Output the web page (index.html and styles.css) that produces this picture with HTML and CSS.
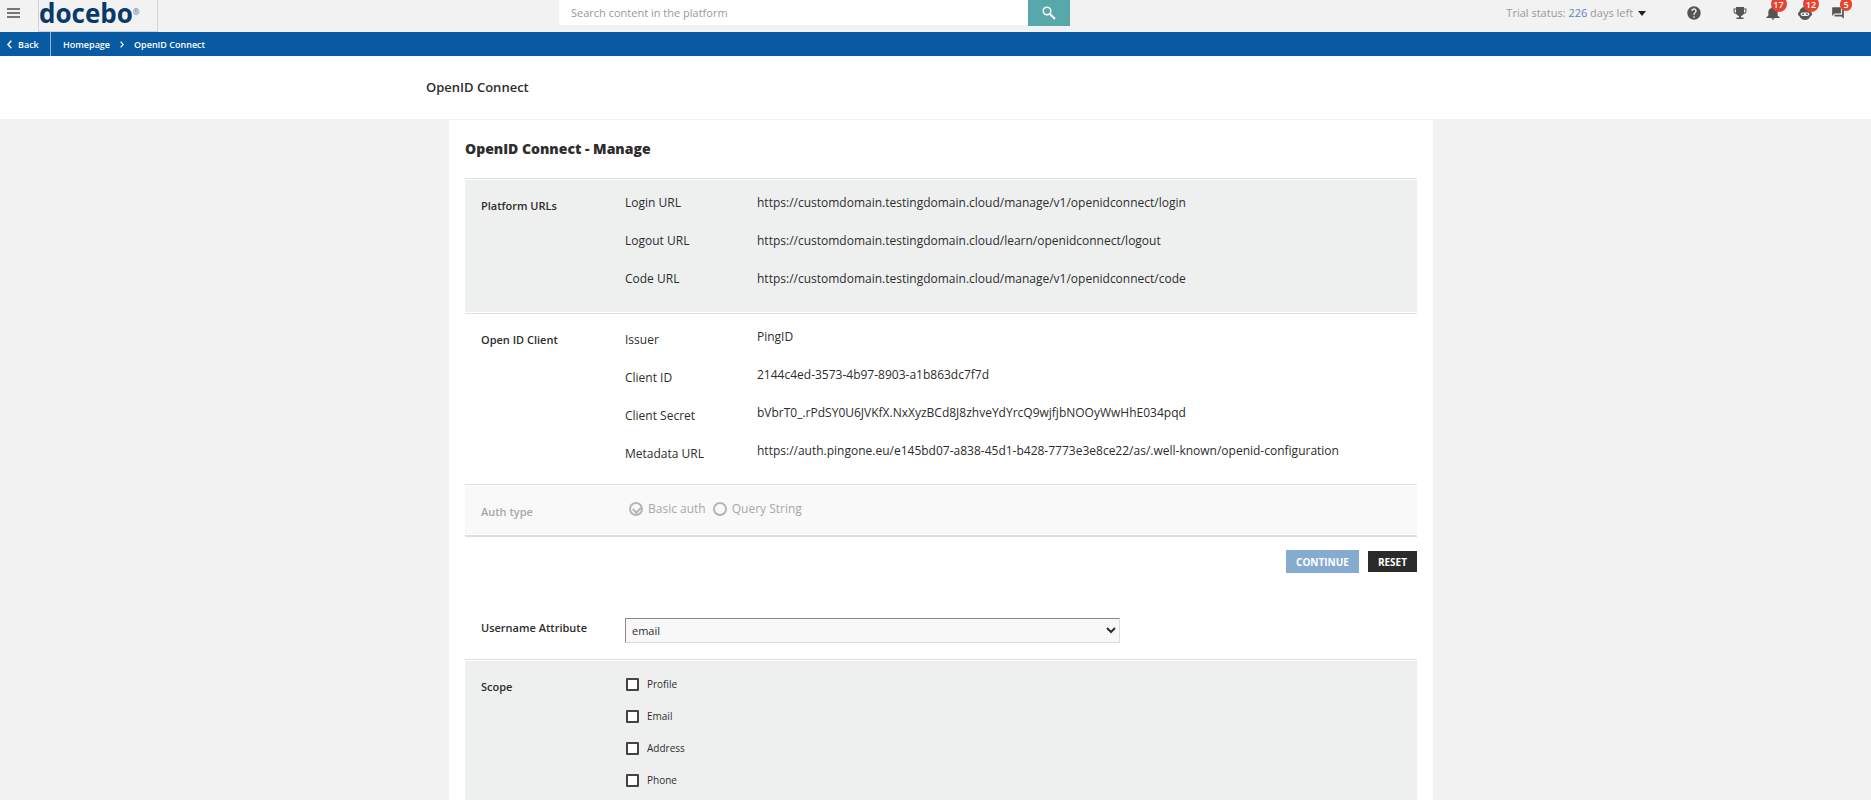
FILE: index.html
```html
<!DOCTYPE html>
<html lang="en">
<head>
    <meta charset="UTF-8">
    <meta name="viewport" content="width=device-width, initial-scale=1.0">
    <title>OpenID Connect</title>
    <link rel="stylesheet" href="styles.css">
</head>
<body>
    <header class="topbar">
        <button class="menu-btn" type="button" aria-label="Menu"><span></span><span></span><span></span></button>
        <a class="logo" href="#">docebo<sup>®</sup></a>

        <form class="search">
            <input type="search" placeholder="Search content in the platform" aria-label="Search">
            <button type="button" aria-label="Submit search">
                <svg width="14" height="14" viewBox="0 0 14 14"><circle cx="5" cy="5" r="3.8" fill="none" stroke="#fff" stroke-width="1.5"/><path d="M8 8l5 5" stroke="#fff" stroke-width="2"/></svg>
            </button>
        </form>

        <button class="trial" type="button">Trial status: <b>226</b> days left <i class="caret"></i></button>

        <nav class="tools">
            <a class="tool" href="#" aria-label="Help">
                <svg width="16" height="16" viewBox="0 0 24 24"><path d="M12 2C6.48 2 2 6.48 2 12s4.480 10 10 10 10-4.480 10-10S17.520 2 12 2zm1 17h-2v-2h2v2zm2.070-7.750l-.9.920C13.450 12.900 13 13.500 13 15h-2v-.5c0-1.100.45-2.100 1.170-2.830l1.240-1.260c.37-.36.59-.86.59-1.410 0-1.100-.9-2-2-2s-2 .9-2 2H8c0-2.210 1.790-4 4-4s4 1.790 4 4c0 .88-.36 1.680-.93 2.250z"/></svg>
            </a>
            <a class="tool" href="#" aria-label="Awards">
                <svg width="14" height="14" viewBox="0 0 14 14"><path d="M3 1h8v1.500h2.500v2.500c0 1.800-1.200 2.800-2.800 3-.6 1-1.500 1.700-2.700 1.900v1.600h2.500v1.500h-7v-1.500H6V9.900C4.800 9.700 3.900 9 3.300 8 1.700 7.800.5 6.800.5 5V2.500H3zM1.500 3.600V5c0 .9.5 1.500 1.500 1.800V3.600zm9.500 0v3.200c1-.3 1.500-.9 1.500-1.800V3.600z"/></svg>
            </a>
            <a class="tool" href="#" aria-label="Notifications">
                <svg width="16" height="16" viewBox="0 0 24 24"><path d="M12 22c1.100 0 2-.9 2-2h-4c0 1.100.9 2 2 2zm7-6v-5c0-3.400-1.900-5.900-5-6.600V3.500a2 2 0 0 0-4 0v.9C6.900 5.100 5 7.600 5 11v5l-3 2.500V19.500h20v-1z"/></svg>
                <span class="badge">17</span>
            </a>
            <a class="tool" href="#" aria-label="Assistant">
                <svg width="16" height="16" viewBox="0 0 16 16"><path fill-rule="evenodd" d="M8 2C4.800 2 2.700 4 2.300 7 1.500 7.200 1 8 1 9s.5 1.900 1.300 2.100C3.200 13.500 5.200 15 8 15s4.800-1.500 5.700-3.900C14.500 10.900 15 10 15 9s-.5-1.800-1.300-2C13.300 4 11.200 2 8 2zM5.500 7.500h5c1.200 0 1.900.6 1.900 1.500s-.7 1.900-1.900 1.900h-5c-1.200 0-1.900-1-1.900-1.900s.7-1.500 1.900-1.500z"/><circle cx="6" cy="9.200" r=".9"/><circle cx="10" cy="9.200" r=".9"/></svg>
                <span class="badge">12</span>
            </a>
            <a class="tool" href="#" aria-label="Messages">
                <svg width="14" height="14" viewBox="0 0 24 24"><path d="M21 6h-2v9H6v2c0 .55.45 1 1 1h11l4 4V7c0-.55-.45-1-1-1zm-4 6V3c0-.55-.45-1-1-1H3c-.55 0-1 .45-1 1v14l4-4h10c.55 0 1-.45 1-1z"/></svg>
                <span class="badge small">5</span>
            </a>
        </nav>
    </header>

    <nav class="breadcrumb">
        <a class="back" href="#">
            <svg width="5" height="9" viewBox="0 0 5 9"><path d="M4.300.7L1 4.500l3.300 3.800" fill="none" stroke="#fff" stroke-width="1.500"/></svg>
            <span>Back</span>
        </a>
        <a href="#">Homepage</a>
        <svg width="4" height="7" viewBox="0 0 4 7"><path d="M.6.6L3.200 3.500.6 6.400" fill="none" stroke="#fff" stroke-width="1.200"/></svg>
        <a href="#">OpenID Connect</a>
    </nav>

    <div class="title-bar">
        <h1 class="wrap">OpenID Connect</h1>
    </div>

    <div class="wrap content">
        <main class="panel">
            <h2>OpenID Connect - Manage</h2>

            <section class="group shaded urls">
                <h3>Platform URLs</h3>
                <dl>
                    <dt>Login URL</dt>
                    <dd>https://customdomain.testingdomain.cloud/manage/v1/openidconnect/login</dd>
                    <dt>Logout URL</dt>
                    <dd>https://customdomain.testingdomain.cloud/learn/openidconnect/logout</dd>
                    <dt>Code URL</dt>
                    <dd>https://customdomain.testingdomain.cloud/manage/v1/openidconnect/code</dd>
                </dl>
            </section>

            <section class="group client">
                <h3>Open ID Client</h3>
                <dl>
                    <dt>Issuer</dt>
                    <dd>PingID</dd>
                    <dt>Client ID</dt>
                    <dd>2144c4ed-3573-4b97-8903-a1b863dc7f7d</dd>
                    <dt>Client Secret</dt>
                    <dd>bVbrT0_.rPdSY0U6JVKfX.NxXyzBCd8J8zhveYdYrcQ9wjfjbNOOyWwHhE034pqd</dd>
                    <dt>Metadata URL</dt>
                    <dd>https://auth.pingone.eu/e145bd07-a838-45d1-b428-7773e3e8ce22/as/.well-known/openid-configuration</dd>
                </dl>
            </section>

            <section class="group auth">
                <h3>Auth type</h3>
                <div class="radios">
                    <label><input type="radio" name="auth" checked disabled>Basic auth</label>
                    <label><input type="radio" name="auth" disabled>Query String</label>
                </div>
            </section>

            <div class="actions">
                <button class="btn continue" type="button">CONTINUE</button>
                <button class="btn reset" type="button">RESET</button>
            </div>

            <section class="username">
                <label for="username-attr">Username Attribute</label>
                <select id="username-attr">
                    <option>email</option>
                </select>
            </section>

            <section class="group shaded scope">
                <h3>Scope</h3>
                <div class="checks">
                    <label><input type="checkbox">Profile</label>
                    <label><input type="checkbox">Email</label>
                    <label><input type="checkbox">Address</label>
                    <label><input type="checkbox">Phone</label>
                </div>
            </section>
        </main>
    </div>
</body>
</html>
```
FILE: styles.css
```css
* {
    box-sizing: border-box;
}
body {
    margin: 0;
    min-height: 100vh;
    display: flex;
    flex-direction: column;
    background: #f2f2f2;
    color: #2d2d2d;
    font-family: "Open Sans", sans-serif;
    font-size: 12px;
    line-height: 18px;
}
a {
    color: inherit;
    text-decoration: none;
}
button, input, select {
    font-family: inherit;
    margin: 0;
}
h1, h2, h3, dl, dd {
    margin: 0;
}

/* top bar */
.topbar {
    display: grid;
    grid-template-columns: 38px 120px 1fr auto auto;
    height: 32px;
    align-items: start;
}
.menu-btn {
    display: flex;
    flex-direction: column;
    gap: 2px;
    padding: 8px 0 0 7px;
    border: 0;
    background: none;
}
.menu-btn span {
    width: 13px;
    height: 2px;
    background: #777;
}
.logo {
    height: 32px;
    border: solid #d2d2d2;
    border-width: 0 1px 1px;
    color: #063a68;
    font-size: 26px;
    font-weight: 700;
    line-height: 27px;
}
.logo sup {
    color: #5c86ab;
    font-size: 8px;
    line-height: 8px;
    vertical-align: 8px;
}
.search {
    display: flex;
    align-items: start;
    width: 511px;
    margin-left: 401px;
}
.search input {
    flex: 1;
    height: 25px;
    padding: 0 12px;
    border: 0;
    background: #fff;
    font-size: 11px;
}
.search input::placeholder {
    color: #999;
}
.search button {
    display: flex;
    justify-content: center;
    align-items: center;
    width: 42px;
    height: 26px;
    padding: 0;
    border: 0;
    background: #57a8ab;
}
.trial {
    padding: 4px 0 0;
    border: 0;
    background: none;
    color: #999;
    font-size: 11px;
    line-height: 18px;
}
.trial b {
    color: #5c83c0;
    font-weight: 400;
}
.caret {
    display: inline-block;
    margin-left: 2px;
    border: 4px solid transparent;
    border-top: 5px solid #222;
    border-bottom: 0;
    vertical-align: 1px;
}
.tools {
    display: grid;
    grid-template-columns: 56px 35px 31px 34px 32px;
    padding: 0 17px 0 20px;
}
.tool {
    position: relative;
    display: flex;
    justify-content: center;
    align-items: center;
    height: 25px;
    fill: #555;
}
.badge {
    position: absolute;
    top: -4px;
    left: 50%;
    min-width: 16px;
    height: 16px;
    margin-left: -2px;
    border-radius: 8px;
    background: #e8432f;
    color: #fff;
    font-size: 9px;
    font-weight: 600;
    line-height: 17px;
    text-align: center;
}
.badge.small {
    min-width: 12px;
    height: 13px;
    top: -2px;
    margin-left: 2px;
    line-height: 13px;
}

/* breadcrumb */
.breadcrumb {
    display: flex;
    align-items: center;
    gap: 10px;
    height: 24px;
    background: #085aa2;
    color: #fff;
    font-size: 9px;
    font-weight: 600;
}
.breadcrumb > a:not(.back), .back span {
    padding-top: 2px;
}
.back {
    display: flex;
    align-items: center;
    gap: 6px;
    width: 51px;
    height: 24px;
    margin-right: 2px;
    padding-left: 7px;
    border-right: 1px solid #8fb4d6;
}

/* page */
.title-bar {
    height: 63px;
    background: #fff;
}
.wrap {
    width: 100%;
    max-width: 1019px;
    margin: 0 auto;
}
.title-bar h1 {
    font-size: 13px;
    font-weight: 600;
    line-height: 62px;
}
.content {
    flex: 1;
    display: flex;
    padding: 1px 12px 0 23px;
}
.panel {
    flex: 1;
    display: flex;
    flex-direction: column;
    padding: 0 16px;
    background: #fff;
}
.panel h2 {
    font-size: 14px;
    font-weight: 800;
    line-height: 58px;
}
.group {
    display: grid;
    grid-template-columns: 144px 1fr;
    padding: 15px 16px 0;
    border-top: 1px solid #dedede;
    box-shadow: inset 0 1px #fff, inset 0 -1px #fff;
}
.shaded {
    background: #eef0f0;
}
.group h3, .username label {
    font-size: 11px;
    font-weight: 600;
    line-height: 24px;
}
dl {
    display: grid;
    grid-template-columns: 132px 1fr;
    grid-auto-rows: 38px;
}
.urls {
    padding-bottom: 5px;
}
.client {
    padding-top: 14px;
    padding-bottom: 4px;
}
.client dt {
    padding-top: 3px;
}
.auth {
    height: 53px;
    border-bottom: 2px solid #dedede;
    background: #f9f9f9;
    color: #a8a8a8;
}
.radios {
    display: flex;
    gap: 7px;
    height: 18px;
    padding-left: 4px;
}
.radios label, .checks label {
    display: flex;
    align-items: center;
}
.radios input {
    appearance: none;
    width: 14px;
    height: 14px;
    margin-right: 5px;
    border: 2px solid #b5b5b5;
    border-radius: 50%;
}
.radios input:checked::before {
    content: "";
    display: block;
    width: 6px;
    height: 4px;
    margin: 2px;
    border: solid #b5b5b5;
    border-width: 0 0 2px 2px;
    transform: rotate(-45deg);
}
.actions {
    display: flex;
    justify-content: flex-end;
    align-items: center;
    gap: 9px;
    padding: 13px 0 0;
}
.btn {
    height: 21px;
    padding: 0 10px;
    border: 0;
    color: #fff;
    font-size: 10px;
    font-weight: 700;
}
.continue {
    height: 23px;
    background: #85abd1;
}
.reset {
    background: #2b2b2b;
}
.username {
    display: grid;
    grid-template-columns: 144px 495px;
    padding: 45px 16px 16px;
}
.username label {
    line-height: 20px;
}
.username select {
    height: 25px;
    padding: 0 2px;
    border: 1px solid;
    border-color: #888 #ddd #ddd #888;
    border-radius: 0;
    background: #f8f8f8;
    color: #2d2d2d;
    font-size: 11px;
}
.scope {
    flex: 1;
}
.checks label {
    height: 18px;
    margin-bottom: 14px;
    font-size: 10px;
}
.checks input {
    appearance: none;
    width: 13px;
    height: 13px;
    margin: 0 8px 0 1px;
    border: 2px solid #444;
    border-radius: 1px;
    background: #fff;
}
```
